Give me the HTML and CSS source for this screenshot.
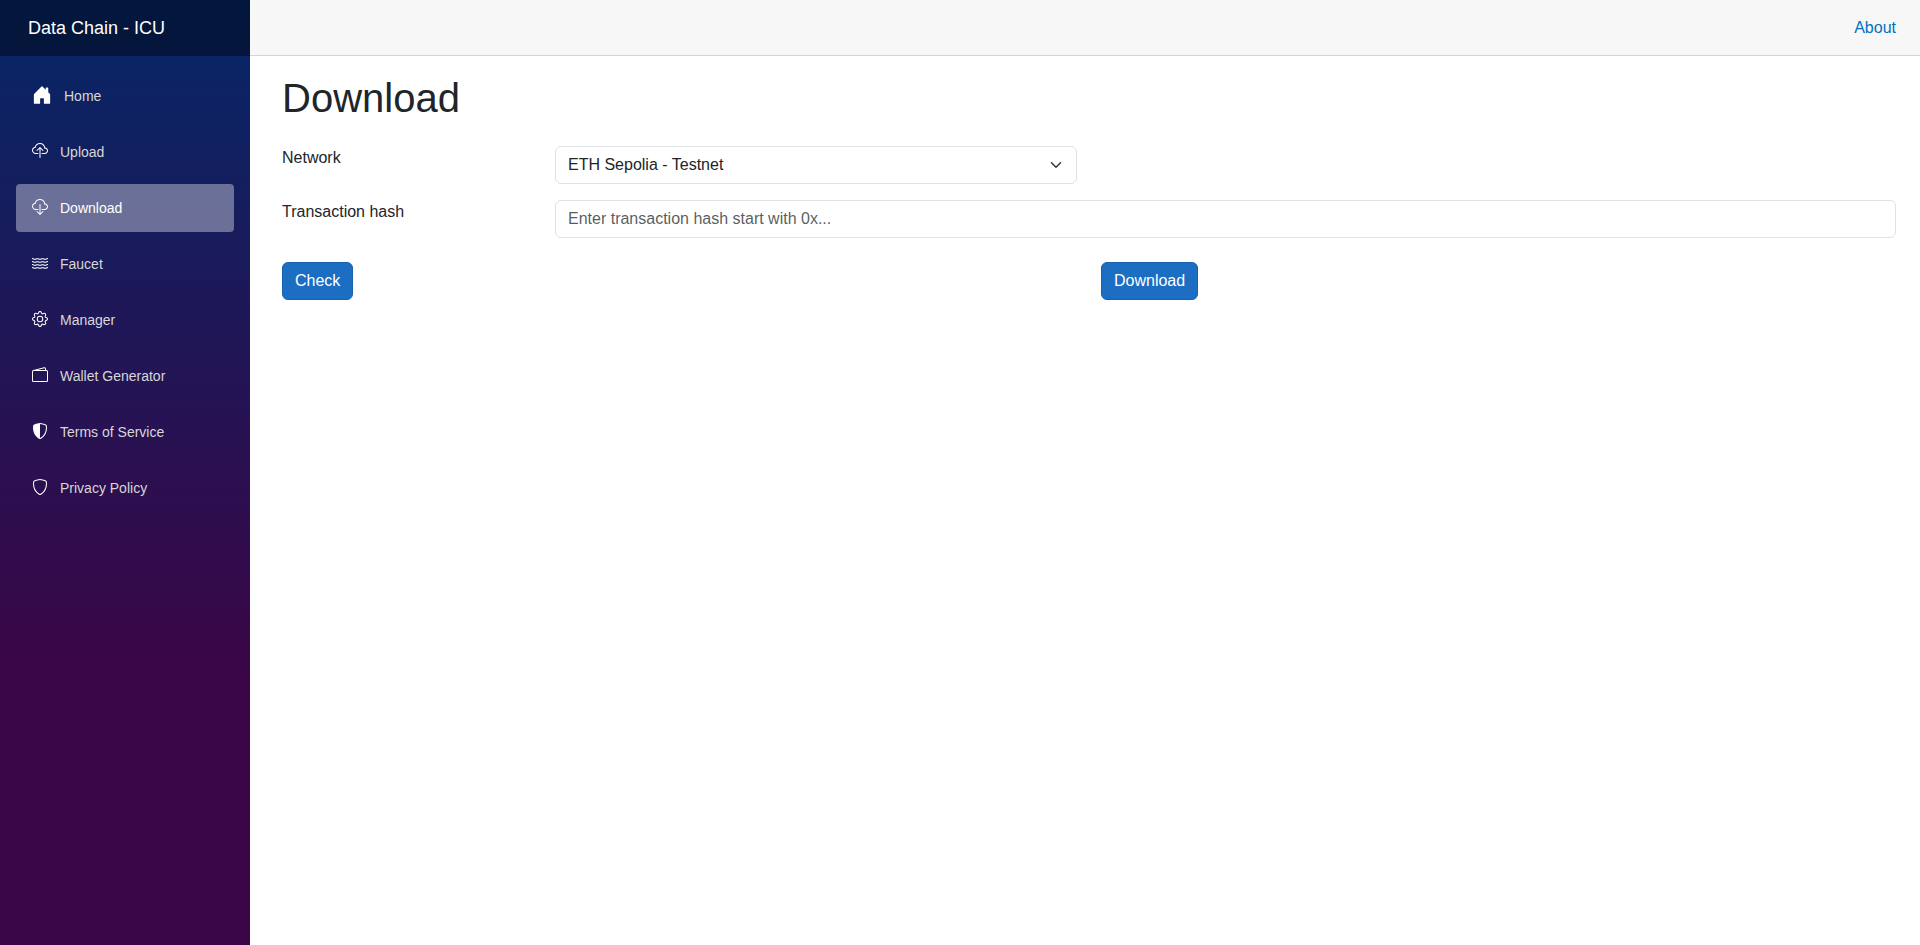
FILE: index.html
```html
<!DOCTYPE html>
<html lang="en">
<head>
    <meta charset="UTF-8">
    <meta name="viewport" content="width=device-width, initial-scale=1.0">
    <title>Download</title>
    <link rel="stylesheet" href="styles.css">
</head>
<body>
    <div class="page">
        <div class="sidebar">
            <div class="brand-row">
                <a class="brand" href="#">Data Chain - ICU</a>
            </div>
            <nav class="nav">
                <a class="nav-link" href="#">
                    <svg class="icon icon-home" viewBox="0 0 16 16" aria-hidden="true"><path d="M6.5 14.5v-3.505c0-.245.25-.495.5-.495h2c.25 0 .5.25.5.5v3.5a.5.5 0 0 0 .5.5h4a.5.5 0 0 0 .5-.5v-7a.5.5 0 0 0-.146-.354L13 5.793V2.5a.5.5 0 0 0-.5-.5h-1a.5.5 0 0 0-.5.5v1.293L8.354 1.146a.5.5 0 0 0-.708 0l-6 6A.5.5 0 0 0 1.5 7.5v7a.5.5 0 0 0 .5.5h4a.5.5 0 0 0 .5-.5Z"/></svg>
                    Home
                </a>
                <a class="nav-link" href="#">
                    <svg class="icon" viewBox="0 0 16 16" aria-hidden="true"><path d="M4.406 1.342A5.53 5.53 0 0 1 8 0c2.69 0 4.923 2 5.166 4.579C14.758 4.804 16 6.137 16 7.773 16 9.569 14.502 11 12.687 11H10a.5.5 0 0 1 0-1h2.688C13.979 10 15 8.988 15 7.773c0-1.216-1.02-2.228-2.313-2.228h-.5v-.5C12.188 2.825 10.328 1 8 1a4.53 4.53 0 0 0-2.941 1.1c-.757.652-1.153 1.438-1.153 2.055v.448l-.445.049C2.064 4.805 1 5.952 1 7.318 1 8.785 2.23 10 3.781 10H6a.5.5 0 0 1 0 1H3.781C1.708 11 0 9.366 0 7.318c0-1.763 1.266-3.223 2.942-3.593.143-.863.698-1.723 1.464-2.383z"/><path d="M7.646 4.146a.5.5 0 0 1 .708 0l3 3a.5.5 0 0 1-.708.708L8.5 5.707V14.5a.5.5 0 0 1-1 0V5.707L5.354 7.854a.5.5 0 1 1-.708-.708l3-3z"/></svg>
                    Upload
                </a>
                <a class="nav-link active" href="#">
                    <svg class="icon" viewBox="0 0 16 16" aria-hidden="true"><path d="M4.406 1.342A5.53 5.53 0 0 1 8 0c2.69 0 4.923 2 5.166 4.579C14.758 4.804 16 6.137 16 7.773 16 9.569 14.502 11 12.687 11H10a.5.5 0 0 1 0-1h2.688C13.979 10 15 8.988 15 7.773c0-1.216-1.02-2.228-2.313-2.228h-.5v-.5C12.188 2.825 10.328 1 8 1a4.53 4.53 0 0 0-2.941 1.1c-.757.652-1.153 1.438-1.153 2.055v.448l-.445.049C2.064 4.805 1 5.952 1 7.318 1 8.785 2.23 10 3.781 10H6a.5.5 0 0 1 0 1H3.781C1.708 11 0 9.366 0 7.318c0-1.763 1.266-3.223 2.942-3.593.143-.863.698-1.723 1.464-2.383z"/><path d="M7.646 15.854a.5.5 0 0 0 .708 0l3-3a.5.5 0 0 0-.708-.708L8.5 14.293V5.5a.5.5 0 0 0-1 0v8.793l-2.146-2.147a.5.5 0 0 0-.708.708l3 3z"/></svg>
                    Download
                </a>
                <a class="nav-link" href="#">
                    <svg class="icon" viewBox="0 0 16 16" aria-hidden="true">
                        <defs>
                            <path id="wave" d="M.036 3.314a.5.5 0 0 1 .65-.278l1.757.703a1.5 1.5 0 0 0 1.114 0l1.014-.406a2.5 2.5 0 0 1 1.857 0l1.015.406a1.5 1.5 0 0 0 1.114 0l1.014-.406a2.5 2.5 0 0 1 1.857 0l1.015.406a1.5 1.5 0 0 0 1.114 0l1.757-.703a.5.5 0 1 1 .372.928l-1.758.703a2.5 2.5 0 0 1-1.857 0l-1.014-.406a1.5 1.5 0 0 0-1.114 0l-1.015.406a2.5 2.5 0 0 1-1.857 0l-1.014-.406a1.5 1.5 0 0 0-1.114 0l-1.015.406a2.5 2.5 0 0 1-1.857 0L.314 3.964a.5.5 0 0 1-.278-.65z"/>
                        </defs>
                        <use href="#wave"/>
                        <use href="#wave" y="3"/>
                        <use href="#wave" y="6"/>
                        <use href="#wave" y="9"/>
                    </svg>
                    Faucet
                </a>
                <a class="nav-link" href="#">
                    <svg class="icon" viewBox="0 0 16 16" aria-hidden="true"><path d="M8 4.754a3.246 3.246 0 1 0 0 6.492 3.246 3.246 0 0 0 0-6.492zM5.754 8a2.246 2.246 0 1 1 4.492 0 2.246 2.246 0 0 1-4.492 0z"/><path d="M9.796 1.343c-.527-1.79-3.065-1.79-3.592 0l-.094.319a.873.873 0 0 1-1.255.52l-.292-.16c-1.64-.892-3.433.902-2.54 2.541l.159.292a.873.873 0 0 1-.52 1.255l-.319.094c-1.79.527-1.79 3.065 0 3.592l.319.094a.873.873 0 0 1 .52 1.255l-.16.292c-.892 1.64.901 3.434 2.541 2.54l.292-.159a.873.873 0 0 1 1.255.52l.094.319c.527 1.79 3.065 1.79 3.592 0l.094-.319a.873.873 0 0 1 1.255-.52l.292.16c1.64.893 3.434-.902 2.54-2.541l-.159-.292a.873.873 0 0 1 .52-1.255l.319-.094c1.79-.527 1.79-3.065 0-3.592l-.319-.094a.873.873 0 0 1-.52-1.255l.16-.292c.893-1.64-.902-3.433-2.541-2.54l-.292.159a.873.873 0 0 1-1.255-.52l-.094-.319zm-2.633.283c.246-.835 1.428-.835 1.674 0l.094.319a1.873 1.873 0 0 0 2.693 1.115l.291-.16c.764-.415 1.6.42 1.184 1.185l-.159.292a1.873 1.873 0 0 0 1.116 2.692l.318.094c.835.246.835 1.428 0 1.674l-.319.094a1.873 1.873 0 0 0-1.115 2.693l.16.291c.415.764-.42 1.6-1.185 1.184l-.291-.159a1.873 1.873 0 0 0-2.693 1.116l-.094.318c-.246.835-1.428.835-1.674 0l-.094-.319a1.873 1.873 0 0 0-2.692-1.115l-.292.16c-.764.415-1.6-.42-1.184-1.185l.159-.291A1.873 1.873 0 0 0 1.945 8.93l-.319-.094c-.835-.246-.835-1.428 0-1.674l.319-.094A1.873 1.873 0 0 0 3.06 4.377l-.16-.292c-.415-.764.42-1.6 1.185-1.184l.292.159a1.873 1.873 0 0 0 2.692-1.115l.094-.319z"/></svg>
                    Manager
                </a>
                <a class="nav-link" href="#">
                    <svg class="icon" viewBox="0 0 16 16" aria-hidden="true"><path d="M12.136.326A1.5 1.5 0 0 1 14 1.78V3h.5A1.5 1.5 0 0 1 16 4.5v9a1.5 1.5 0 0 1-1.5 1.5h-13A1.5 1.5 0 0 1 0 13.5v-9a1.5 1.5 0 0 1 1.432-1.499L12.136.326zM5.562 3H13V1.78a.5.5 0 0 0-.621-.484L5.562 3zM1.5 4a.5.5 0 0 0-.5.5v9a.5.5 0 0 0 .5.5h13a.5.5 0 0 0 .5-.5v-9a.5.5 0 0 0-.5-.5h-13z"/></svg>
                    Wallet Generator
                </a>
                <a class="nav-link" href="#">
                    <svg class="icon" viewBox="0 0 16 16" aria-hidden="true"><path fill-rule="evenodd" d="M8 14.933a.615.615 0 0 0 .1-.025c.076-.023.174-.061.294-.118.24-.113.547-.29.893-.533a10.726 10.726 0 0 0 2.287-2.233c1.527-1.997 2.807-5.031 2.253-9.188a.48.48 0 0 0-.328-.39c-.651-.213-1.75-.56-2.837-.855C9.552 1.29 8.531 1.067 8 1.067v13.866zM5.072.56C6.157.265 7.31 0 8 0s1.843.265 2.928.56c1.11.3 2.229.655 2.887.87a1.54 1.54 0 0 1 1.044 1.262c.596 4.477-.787 7.795-2.465 9.99a11.775 11.775 0 0 1-2.517 2.453 7.159 7.159 0 0 1-1.048.625c-.28.132-.581.24-.829.24s-.548-.108-.829-.24a7.158 7.158 0 0 1-1.048-.625 11.777 11.777 0 0 1-2.517-2.453C1.928 10.487.545 7.169 1.141 2.692A1.54 1.54 0 0 1 2.185 1.43 62.456 62.456 0 0 1 5.072.56z"/></svg>
                    Terms of Service
                </a>
                <a class="nav-link" href="#">
                    <svg class="icon" viewBox="0 0 16 16" aria-hidden="true"><path fill-rule="evenodd" d="M5.338 1.59a61.44 61.44 0 0 0-2.837.856.481.481 0 0 0-.328.39c-.554 4.157.726 7.19 2.253 9.188a10.725 10.725 0 0 0 2.287 2.233c.346.244.652.42.893.533.12.057.218.095.293.118a.55.55 0 0 0 .101.025.615.615 0 0 0 .1-.025c.076-.023.174-.061.294-.118.24-.113.547-.29.893-.533a10.726 10.726 0 0 0 2.287-2.233c1.527-1.997 2.807-5.031 2.253-9.188a.48.48 0 0 0-.328-.39c-.651-.213-1.75-.56-2.837-.855C9.552 1.29 8.531 1.067 8 1.067c-.53 0-1.552.223-2.662.524zM5.072.56C6.157.265 7.31 0 8 0s1.843.265 2.928.56c1.11.3 2.229.655 2.887.87a1.54 1.54 0 0 1 1.044 1.262c.596 4.477-.787 7.795-2.465 9.99a11.775 11.775 0 0 1-2.517 2.453 7.159 7.159 0 0 1-1.048.625c-.28.132-.581.24-.829.24s-.548-.108-.829-.24a7.158 7.158 0 0 1-1.048-.625 11.777 11.777 0 0 1-2.517-2.453C1.928 10.487.545 7.169 1.141 2.692A1.54 1.54 0 0 1 2.185 1.43 62.456 62.456 0 0 1 5.072.56z"/></svg>
                    Privacy Policy
                </a>
            </nav>
        </div>

        <main class="main">
            <div class="top-row">
                <a href="#">About</a>
            </div>
            <article class="content">
                <h1>Download</h1>
                <form>
                    <div class="row">
                        <label class="field-label" for="network">Network</label>
                        <select class="field field-short" id="network">
                            <option>ETH Sepolia - Testnet</option>
                        </select>
                    </div>
                    <div class="row">
                        <label class="field-label" for="hash">Transaction hash</label>
                        <input class="field field-long" type="text" id="hash" placeholder="Enter transaction hash start with 0x...">
                    </div>
                    <div class="row actions">
                        <div class="half"><button class="btn" type="button">Check</button></div>
                        <div class="half"><button class="btn" type="button">Download</button></div>
                    </div>
                </form>
            </article>
        </main>
    </div>
</body>
</html>
```

FILE: styles.css
```css
* {
    box-sizing: border-box;
}
body {
    margin: 0;
    font-family: "Liberation Sans", Arial, sans-serif;
    font-size: 16px;
    line-height: 24px;
    color: #212529;
    background-color: white;
}
.page {
    display: flex;
    min-height: 100vh;
}

/* sidebar */
.sidebar {
    width: 250px;
    flex-shrink: 0;
    background-image: linear-gradient(180deg, rgb(5, 39, 103) 0%, #3a0647 70%);
}
.brand-row {
    display: flex;
    align-items: center;
    height: 56px;
    padding: 0 28px;
    background-color: rgba(0, 0, 0, 0.4);
}
.brand {
    font-size: 18px;
    color: white;
    text-decoration: none;
}
.nav {
    display: flex;
    flex-direction: column;
    gap: 8px;
    padding: 16px;
}
.nav-link {
    display: flex;
    align-items: center;
    gap: 12px;
    height: 48px;
    padding: 0 16px;
    border-radius: 4px;
    font-size: 14px;
    color: #d7d7d7;
    text-decoration: none;
}
.nav-link:hover {
    background-color: rgba(255, 255, 255, 0.1);
    color: white;
}
.nav-link.active {
    background-color: rgba(255, 255, 255, 0.37);
    color: white;
}
.icon {
    width: 16px;
    height: 16px;
    margin-bottom: 2px;
    fill: white;
}
.icon-home {
    width: 20px;
    height: 20px;
}

/* main area */
.main {
    flex: 1;
    min-width: 0;
}
.top-row {
    display: flex;
    justify-content: flex-end;
    align-items: center;
    height: 56px;
    padding: 0 24px 0 32px;
    background-color: #f7f7f7;
    border-bottom: 1px solid #d6d5d5;
}
.top-row a {
    color: #0071c1;
    text-decoration: none;
}
.top-row a:hover {
    text-decoration: underline;
}
.content {
    padding: 18px 24px 0 32px;
}
h1 {
    margin: 0 0 24px;
    font-size: 40px;
    font-weight: normal;
    line-height: 48px;
}
.row {
    display: grid;
    grid-template-columns: repeat(12, 1fr);
    column-gap: 24px;
    margin-bottom: 16px;
}
.field-label {
    grid-column: span 2;
}
.field {
    width: 100%;
    height: 38px;
    padding: 6px 12px;
    font-family: inherit;
    font-size: 16px;
    line-height: 24px;
    color: #212529;
    background-color: white;
    border: 1px solid #dee2e6;
    border-radius: 6px;
}
.field::placeholder {
    color: rgba(33, 37, 41, 0.75);
}
.field-short {
    grid-column: span 4;
}
.field-long {
    grid-column: span 10;
}
select.field {
    appearance: none;
    padding-right: 36px;
    background-image: url("data:image/svg+xml,%3csvg xmlns='http://www.w3.org/2000/svg' viewBox='0 0 16 16'%3e%3cpath fill='none' stroke='%23343a40' stroke-linecap='round' stroke-linejoin='round' stroke-width='2' d='m2 5 6 6 6-6'/%3e%3c/svg%3e");
    background-repeat: no-repeat;
    background-position: right 12px center;
    background-size: 16px 12px;
}
.actions {
    margin-top: 24px;
}
.half {
    grid-column: span 6;
}
.btn {
    height: 38px;
    padding: 6px 12px;
    font-family: inherit;
    font-size: 16px;
    line-height: 24px;
    color: white;
    background-color: #1b6ec2;
    border: 1px solid #1861ac;
    border-radius: 6px;
    cursor: pointer;
}
.btn:hover {
    background-color: #1861ac;
}
```
